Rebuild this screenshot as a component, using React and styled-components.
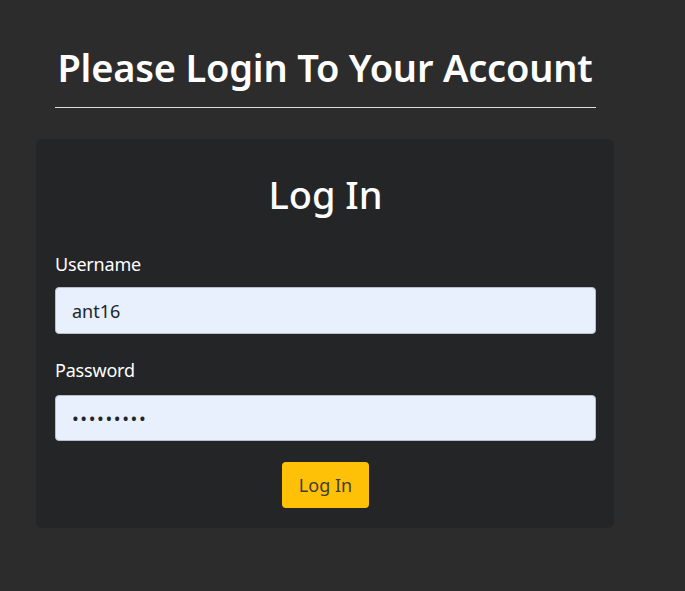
import React from 'react';
import styled, { createGlobalStyle } from 'styled-components';

const GlobalStyle = createGlobalStyle`
  body {
    margin: 0;
    background-color: #2c2c2c;
    font-family: 'Noto Sans', 'Open Sans', sans-serif;
    color: #ffffff;
  }
`;

const Page = styled.main`
  width: 578px;
  margin-left: 36px;
  padding-top: 43px;
`;

const Header = styled.header`
  width: 541px;
  margin: 0 auto;
  padding-bottom: 16px;
  border-bottom: 1px solid #dcdcdc;
  text-align: center;
`;

const Title = styled.h1`
  margin: 0;
  font-size: 38px;
  font-weight: 600;
  line-height: 48px;
  letter-spacing: -0.2px;
`;

const Card = styled.form`
  margin-top: 31px;
  padding: 20px 18px 20px 19px;
  border-radius: 6px;
  background-color: #242527;
`;

const CardTitle = styled.h2`
  margin: 11px 0 33px;
  font-size: 38px;
  font-weight: 500;
  line-height: 48px;
  text-align: center;
`;

const Label = styled.label`
  display: block;
  margin-bottom: ${props => props.gap || '9px'};
  font-size: 18px;
  line-height: 27px;
  letter-spacing: -0.2px;
`;

const Input = styled.input`
  display: block;
  box-sizing: border-box;
  width: 100%;
  height: ${props => props.height || '47px'};
  margin-bottom: ${props => props.gap || '23px'};
  padding: 0 16px;
  border: 1px solid #b9bec4;
  border-radius: 4px;
  background-color: #e8f0fe;
  color: #212529;
  font-family: 'Noto Sans', 'Open Sans', sans-serif;
  font-size: 18px;
  letter-spacing: ${props => (props.type === 'password' ? '1.6px' : '0')};
  outline: none;
`;

const Actions = styled.div`
  display: flex;
  justify-content: center;
`;

const SubmitBtn = styled.button`
  width: 87px;
  height: 46px;
  border: none;
  border-radius: 4px;
  background-color: #ffc107;
  color: #3f3d35;
  font-family: 'Noto Sans', 'Open Sans', sans-serif;
  font-size: 18px;
  cursor: pointer;
`;

const App = () => {
  return (
    <>
      <GlobalStyle />
      <Page>
        <Header>
          <Title>Please Login To Your Account</Title>
        </Header>
        <Card onSubmit={e => e.preventDefault()}>
          <CardTitle>Log In</CardTitle>
          <Label htmlFor="username">Username</Label>
          <Input id="username" type="text" defaultValue="ant16" />
          <Label htmlFor="password" gap="11px">
            Password
          </Label>
          <Input
            id="password"
            type="password"
            defaultValue="123456789"
            height="46px"
            gap="21px"
          />
          <Actions>
            <SubmitBtn type="submit">Log In</SubmitBtn>
          </Actions>
        </Card>
      </Page>
    </>
  );
};

export default App;
